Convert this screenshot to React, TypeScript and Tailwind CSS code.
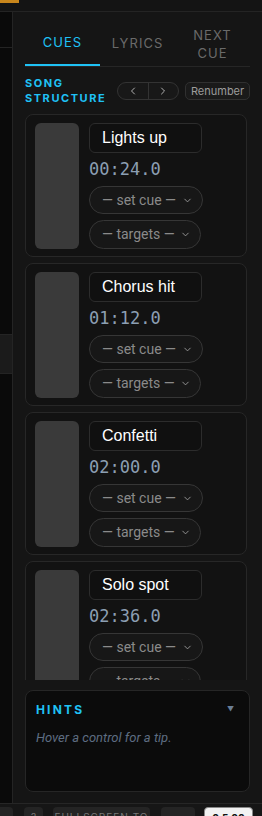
import { ChevronDown, ChevronLeft, ChevronRight } from "lucide-react"

type Cue = {
  name: string
  time: string
}

const cues: Cue[] = [
  { name: "Lights up", time: "00:24.0" },
  { name: "Chorus hit", time: "01:12.0" },
  { name: "Confetti", time: "02:00.0" },
  { name: "Solo spot", time: "02:36.0" },
]

function PillSelect({ label, width, height }: { label: string; width: string; height: string }) {
  return (
    <div
      className={`${width} ${height} flex items-center justify-between rounded-full border border-[#363636] bg-[#171717] pl-[12px] pr-[9px] font-['Roboto',sans-serif] text-[14px] text-[#8a8a8a]`}
    >
      <span>{label}</span>
      <ChevronDown size={11} strokeWidth={2} className="text-[#9a9a9a]" />
    </div>
  )
}

function CueCard({ cue }: { cue: Cue }) {
  return (
    <div className="flex h-[143px] shrink-0 gap-[10px] rounded-lg border border-[#272727] bg-[#121212] pt-2 pb-[7px] pl-[9px]">
      {/* drag handle / colour block */}
      <div className="w-[44px] rounded-md bg-[#3a3a3a]" />
      <div className="flex flex-col">
        <div className="flex h-[30px] w-[113px] items-center rounded-md border border-[#2c2c2c] bg-[#101010] px-3 font-['Liberation_Sans',Arial,sans-serif] text-[16px] text-white">
          {cue.name}
        </div>
        <div className="flex h-[33px] items-center font-['DejaVu_Sans_Mono',monospace] text-[17px] text-[#8c9fb2]">
          {cue.time}
        </div>
        <PillSelect label="— set cue —" width="w-[114px]" height="h-[28px]" />
        <div className="h-[6px]" />
        <PillSelect label="— targets —" width="w-[112px]" height="h-[29px]" />
      </div>
    </div>
  )
}

export default function App() {
  return (
    <div className="flex h-[816px] w-[262px] flex-col overflow-hidden bg-[#151515] font-['Inter','Roboto',sans-serif]">
      {/* top bar */}
      <div className="h-[12px] shrink-0 border-b border-[#242424] bg-[#141414]">
        <div className="h-[3px] w-[19px] bg-[#c8861c]" />
      </div>

      <div className="flex min-h-0 flex-1">
        {/* left rail */}
        <div className="flex w-[13px] shrink-0 flex-col border-r border-[#242424] bg-[#0a0a0a]">
          <div className="h-[36px] border-b border-[#242424]" />
          <div className="h-[286px]" />
          <div className="h-[40px] border-y border-[#242424] bg-[#1b1b1b]" />
        </div>

        {/* side panel */}
        <div className="flex min-w-0 flex-1 flex-col px-3">
          {/* tabs */}
          <div className="grid grid-cols-3 border-b border-[#262626]">
            <button className="flex h-[54px] items-center justify-center border-b-2 border-[#1fc2f5] pt-[10px] text-[13px] tracking-[0.08em] text-[#1fc2f5]">
              CUES
            </button>
            <button className="flex h-[54px] items-center justify-center pt-[10px] text-[13px] tracking-[0.08em] text-[#6a6a6a]">
              LYRICS
            </button>
            <button className="flex h-[54px] items-center justify-center pt-[10px] text-center text-[13px] leading-[18px] tracking-[0.08em] text-[#6a6a6a]">
              NEXT
              <br />
              CUE
            </button>
          </div>

          {/* song structure header */}
          <div className="mt-[9px] flex items-center">
            <div className="text-[11px] font-bold leading-[15px] tracking-[0.14em] text-[#1fc2f5]">
              SONG
              <br />
              STRUCTURE
            </div>
            <div className="ml-[11px] flex h-[18px] w-[63px] items-center rounded-full border border-[#333] bg-[#181818] text-[#b0b0b0]">
              <button className="flex h-full flex-1 items-center justify-center border-r border-[#333]">
                <ChevronLeft size={12} strokeWidth={2} />
              </button>
              <button className="flex h-full flex-1 items-center justify-center">
                <ChevronRight size={12} strokeWidth={2} />
              </button>
            </div>
            <button className="ml-[6px] flex h-[18px] w-[66px] items-center justify-center rounded-[5px] border border-[#303030] bg-[#1a1a1a] text-[11px] text-[#9c9c9c]">
              Renumber
            </button>
          </div>

          {/* cue list */}
          <div className="mt-[8px] flex h-[566px] w-[223px] shrink-0 flex-col gap-[6px] overflow-y-scroll pr-[1px] [&::-webkit-scrollbar]:w-[6px] [&::-webkit-scrollbar-thumb]:rounded-[3px] [&::-webkit-scrollbar-thumb]:bg-[#3a3a3a] [&::-webkit-scrollbar-track]:bg-[#1e1e1e]">
            {cues.map((cue) => (
              <CueCard key={cue.name} cue={cue} />
            ))}
          </div>

          {/* hints */}
          <div className="mt-[10px] h-[102px] shrink-0 rounded-lg border border-[#262626] bg-[#0b0b0b] px-[10px] pt-[10px]">
            <div className="flex items-center justify-between">
              <span className="text-[12px] font-bold tracking-[0.18em] text-[#1fc2f5]">HINTS</span>
              <span className="mr-[5px] text-[7px] text-[#6a7e96]">▼</span>
            </div>
            <p className="mt-[9px] font-['Roboto',sans-serif] text-[13px] italic text-[#5e6d82]">
              Hover a control for a tip.
            </p>
          </div>
        </div>
      </div>

      {/* bottom toolbar, cut off by the window */}
      <div className="flex h-[13px] shrink-0 items-start border-t border-[#262626] bg-[#161616] pt-[3px] text-[10px] leading-[20px]">
        <div className="h-[18px] w-[13px] rounded-r-sm bg-[#242424] text-center text-[#777]">⋯</div>
        <div className="ml-[11px] h-[18px] w-[19px] rounded-sm bg-[#242424] text-center text-[#777]">?</div>
        <div className="ml-[10px] h-[18px] w-[97px] rounded-sm bg-[#242424] text-center tracking-[0.1em] text-[#777]">FULLSCREEN TO</div>
        <div className="ml-[11px] h-[18px] w-[34px] rounded-sm bg-[#242424] text-center text-[#777]">• •</div>
        <div className="ml-[9px] h-[18px] w-[49px] rounded-sm border border-[#888] bg-[#f2f2f2] text-center font-bold text-[#111]">0.5.00</div>
      </div>
    </div>
  )
}
